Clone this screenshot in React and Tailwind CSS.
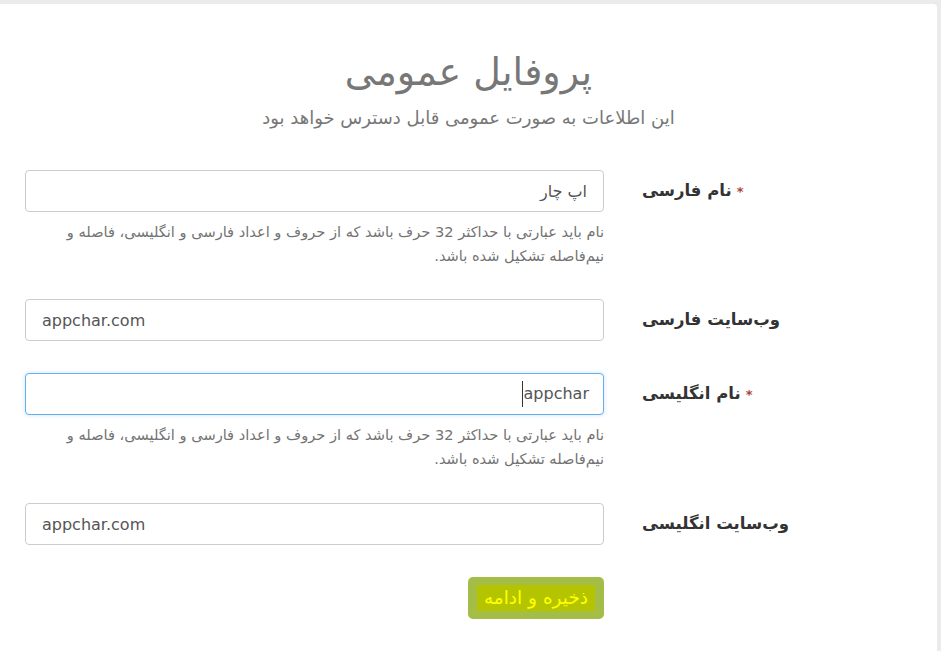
import React from "react";

const FONT = { fontFamily: '"DejaVu Sans", "Liberation Sans", sans-serif' };

function Label({ text, required }) {
  return (
    <div dir="rtl" className="flex-1 pt-[9px] text-left">
      <span className="inline-flex items-center gap-[5px] text-[16.5px] font-bold text-[#333]">
        {required ? <span className="text-[13px] text-[#a94442]">*</span> : null}
        {text}
      </span>
    </div>
  );
}

function Help() {
  return (
    <p dir="rtl" className="mt-[8px] text-right text-[14.6px] leading-[24px] text-[#737373]">
      نام باید عبارتی با حداکثر 32 حرف باشد که از حروف و اعداد فارسی و انگلیسی، فاصله و نیم‌فاصله تشکیل شده باشد.
    </p>
  );
}

function Field({ value, dir = "rtl", focused = false }) {
  if (focused) {
    return (
      <div className="flex h-[42px] w-full items-center justify-end rounded-[4px] border border-[#66afe9] bg-white px-[14px] text-[16px] text-[#555] shadow-[0_0_4px_rgba(102,175,233,0.35)]">
        <span className="mr-[1px] h-[26px] w-px bg-[#333]" />
        <span>{value}</span>
      </div>
    );
  }
  return (
    <input
      readOnly
      dir={dir}
      value={value}
      className="h-[42px] w-full rounded-[4px] border border-[#cccccc] bg-white px-[16px] text-[16px] text-[#555] outline-none"
    />
  );
}

function Row({ label, required, children, help, className = "" }) {
  return (
    <div className={`flex items-start ${className}`}>
      <div className="ml-[25px] w-[579px] shrink-0">
        {children}
        {help ? <Help /> : null}
      </div>
      <div className="w-[38px] shrink-0" />
      <Label text={label} required={required} />
    </div>
  );
}

export default function App() {
  return (
    <div className="min-h-[651px] bg-[#ebebeb] pt-[4px] pr-[4px]" style={FONT}>
      <div className="min-h-[647px] rounded-tr-[4px] bg-white pb-[32px]">
        <div dir="rtl" className="pt-[41px] text-center">
          <h1 className="text-[38px] leading-[54px] text-[#777]">پروفایل عمومی</h1>
          <p className="mt-[5px] text-[18px] leading-[28px] text-[#777]">این اطلاعات به صورت عمومی قابل دسترس خواهد بود</p>
        </div>

        <form className="mt-[38px]">
          <Row label="نام فارسی" required help>
            <Field value="اپ چار" />
          </Row>
          <Row label="وب‌سایت فارسی" className="mt-[31px]">
            <Field value="appchar.com" dir="ltr" />
          </Row>
          <Row label="نام انگلیسی" required help className="mt-[32px]">
            <Field value="appchar" focused />
          </Row>
          <Row label="وب‌سایت انگلیسی" className="mt-[32px]">
            <Field value="appchar.com" dir="ltr" />
          </Row>
          <div className="mt-[32px] flex">
            <div className="ml-[25px] flex w-[579px] justify-end">
              <button
                type="button"
                className="flex h-[42px] w-[136px] items-center justify-center rounded-[5px] bg-[#a4bd47] text-[18.5px] text-[#ffff00]"
              >
                <span dir="rtl" className="bg-[#b4c400] px-[7px] leading-[26px]">ذخیره و ادامه</span>
              </button>
            </div>
          </div>
        </form>
      </div>
    </div>
  );
}
